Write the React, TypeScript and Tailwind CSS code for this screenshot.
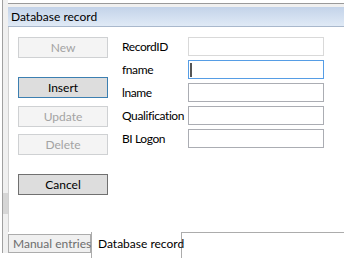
import React from "react";

const font = { fontFamily: 'Lato, "Segoe UI", Arial, sans-serif' };

interface FieldData {
  label: string;
  state: "disabled" | "focused" | "normal";
}

const fields: Array<FieldData> = [
  { label: "RecordID", state: "disabled" },
  { label: "fname", state: "focused" },
  { label: "lname", state: "normal" },
  { label: "Qualification", state: "normal" },
  { label: "BI Logon", state: "normal" },
];

function WinButton(props: { text: string; kind: "disabled" | "default" | "normal"; className?: string }) {
  const look =
    props.kind === "disabled"
      ? "border-[#cfd1d3] bg-[#f4f4f4] text-[#a3a3a3]"
      : props.kind === "default"
        ? "border-[#3c7fb1] bg-[#dddddd] text-black"
        : "border-[#707070] bg-[#dddddd] text-black";
  return (
    <div
      className={`flex h-[21px] w-[90px] items-center justify-center border text-[12px] ${look} ${props.className ?? ""}`}
    >
      {props.text}
    </div>
  );
}

function Field(props: FieldData) {
  const border =
    props.state === "disabled"
      ? "border-[#d9d9d9]"
      : props.state === "focused"
        ? "border-[#569de5]"
        : "border-[#abadb3]";
  return (
    <div className="flex h-[19px] items-center">
      <div className="w-[66px] whitespace-nowrap text-[12px] tracking-[-0.4px] text-black">{props.label}</div>
      <div className={`flex h-[19px] w-[136px] items-center border bg-white ${border}`}>
        {props.state === "focused" && <div className="ml-[1px] h-[14px] w-[2px] bg-[#555]" />}
      </div>
    </div>
  );
}

export default function App() {
  return (
    <div className="flex h-[258px] w-[344px] overflow-hidden bg-white" style={font}>
      {/* outer left gutter */}
      <div className="ml-[2px] flex h-[253px] w-[6px] flex-col border-l border-[#a0a0a0] bg-[#f0f0f0]">
        <div className="mt-[193px] h-[21px] bg-[#d6d6d6]" />
      </div>

      <div className="flex flex-1 flex-col">
        {/* bottom of the panel above */}
        <div className="h-[4px] border-b border-[#9a9a9a] bg-white" />
        <div className="h-[3px] bg-[#f0f0f0]" />

        {/* title bar */}
        <div className="flex h-[20px] items-center border-b border-[#a9b8cc] bg-gradient-to-b from-[#c3d3e9] to-[#e0eaf6] pl-[3px] text-[12px] text-black">
          Database record
        </div>

        {/* panel body */}
        <div className="flex h-[205px] border-l border-[#d0d0d0] pl-[9px] pt-[10px]">
          <div className="flex flex-col">
            <WinButton text="New" kind="disabled" />
            <WinButton text="Insert" kind="default" className="mt-[19px]" />
            <WinButton text="Update" kind="disabled" className="mt-[8px]" />
            <WinButton text="Delete" kind="disabled" className="mt-[7px]" />
            <WinButton text="Cancel" kind="normal" className="mt-[19px]" />
          </div>
          <div className="ml-[14px] flex flex-col gap-[4px]">
            {fields.map((f) => (
              <Field key={f.label} label={f.label} state={f.state} />
            ))}
          </div>
        </div>

        {/* tabs */}
        <div className="flex h-[26px]">
          <div className="mb-[5px] mt-[2px] flex h-[19px] w-[83px] items-center whitespace-nowrap border border-[#acacac] bg-[#f0f0f0] pl-[4px] text-[12px] text-[#6d6d6d]">
            Manual entries
          </div>
          <div className="flex h-[26px] w-[91px] items-center whitespace-nowrap border-x border-[#acacac] bg-white pb-[3px] pl-[6px] text-[12px] text-black">
            Database record
          </div>
          <div className="flex-1 border-t border-[#acacac]" />
        </div>
      </div>
    </div>
  );
}
